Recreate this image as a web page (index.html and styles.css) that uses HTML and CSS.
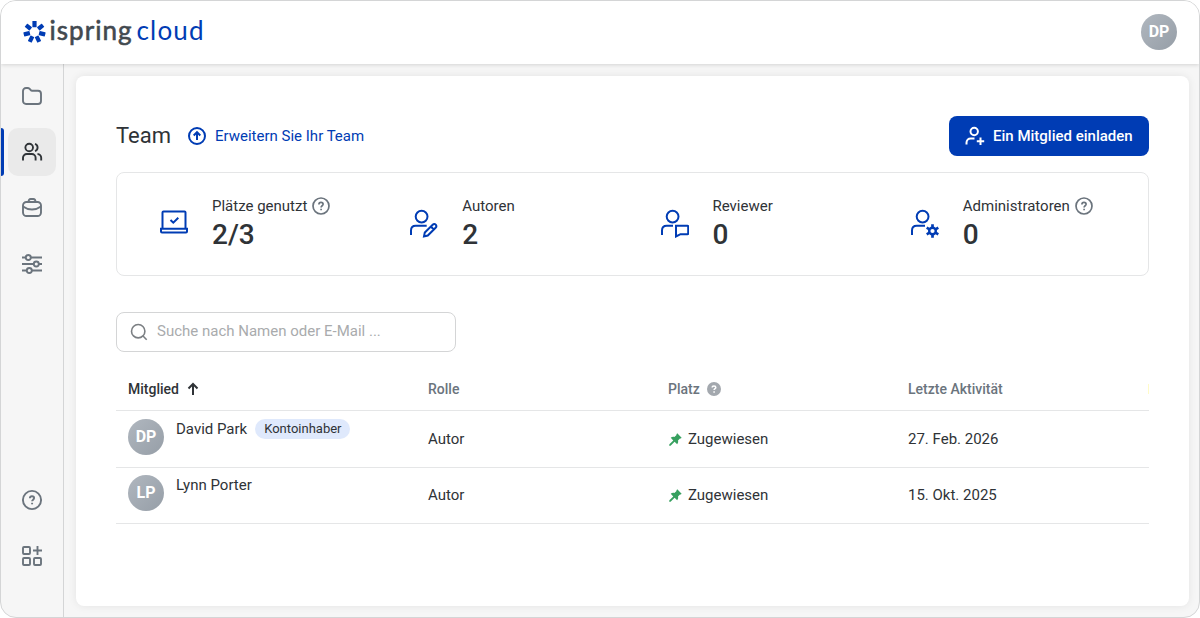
FILE: index.html
```
<!DOCTYPE html>
<html lang="de">
<head>
    <meta charset="UTF-8">
    <meta name="viewport" content="width=device-width, initial-scale=1.0">
    <title>Team - iSpring Cloud</title>
    <link rel="stylesheet" href="styles.css">
</head>
<body>
    <div class="app">
        <header class="header">
            <svg class="logo" width="190" height="48" viewBox="0 -8 190 48">
                <g fill="#003cb4">
                    <rect id="ray" x="9.4" y="5" width="4.200" height="6.300" rx="0.5"/>
                    <use href="#ray" transform="rotate(51.43 11.5 16)"/>
                    <use href="#ray" transform="rotate(102.86 11.5 16)"/>
                    <use href="#ray" transform="rotate(154.29 11.5 16)"/>
                    <use href="#ray" transform="rotate(205.71 11.5 16)"/>
                    <use href="#ray" transform="rotate(257.14 11.5 16)"/>
                    <use href="#ray" transform="rotate(308.57 11.5 16)"/>
                </g>
                <text class="logo-name" x="26.500" y="24" textLength="82">ispring</text>
                <text class="logo-product" x="113.500" y="24" textLength="67">cloud</text>
            </svg>
            <div class="avatar">DP</div>
        </header>
        <div class="body">
            <nav class="sidebar">
                <a class="nav-item">
                    <svg width="24" height="24" viewBox="0 0 24 24"><path d="M3 7a3 3 0 0 1 3-3h1.500c1 0 1.700.3 2.300 1l1 1.100c.3.4.8.6 1.300.6H18a3 3 0 0 1 3 3V17a3 3 0 0 1-3 3H6a3 3 0 0 1-3-3z"/></svg>
                </a>
                <a class="nav-item active">
                    <svg width="24" height="24" viewBox="0 0 24 24"><circle cx="9.200" cy="7.500" r="3.800"/><path d="M3 20.500v-2.700a3.800 3.800 0 0 1 3.800-3.800h5a3.800 3.800 0 0 1 3.800 3.800v2.700M15 3.900a3.800 3.800 0 0 1 0 7.200M17.500 14a3.800 3.800 0 0 1 3.700 3.800v2.700"/></svg>
                </a>
                <a class="nav-item">
                    <svg width="24" height="24" viewBox="0 0 24 24"><rect x="3" y="6" width="18" height="14" rx="3.500"/><path d="M8.500 6c0-2 .8-3 2.200-3h2.600c1.400 0 2.200 1 2.200 3M3 10.500c3 2.200 5.800 3 9 3s6-.8 9-3"/></svg>
                </a>
                <a class="nav-item">
                    <svg width="24" height="24" viewBox="0 0 24 24"><path d="M2 5.500h4M11 5.500h11M2 12h12M19 12h3M2 18.500h5M12 18.500h10"/><circle cx="8.300" cy="5.500" r="2.500"/><circle cx="16.300" cy="12" r="2.500"/><circle cx="9.300" cy="18.500" r="2.500"/></svg>
                </a>
                <div class="nav-spacer"></div>
                <a class="nav-item">
                    <svg width="24" height="24" viewBox="0 0 24 24"><circle cx="12" cy="12" r="9.100"/><path d="M9.900 10.200c0-1.200.9-2 2.100-2s2.100.8 2.100 1.900c0 1.500-2 1.600-2 3.200"/><path d="M12.100 14.800v1.500"/></svg>
                </a>
                <a class="nav-item">
                    <svg width="24" height="24" viewBox="0 0 24 24"><rect x="3" y="3" width="7" height="7" rx="1"/><rect x="3" y="14" width="7" height="7" rx="1"/><rect x="14" y="14" width="7" height="7" rx="1"/><path d="M17.500 2v9M13 6.500h9"/></svg>
                </a>
            </nav>
            <main class="card">
                <div class="title-row">
                    <h1>Team</h1>
                    <a class="upgrade">
                        <svg width="20" height="20" viewBox="0 0 20 20"><circle cx="10" cy="10" r="8"/><path d="M10 14V6.500M6.700 9.500L10 6.200l3.300 3.300"/></svg>
                        Erweitern Sie Ihr Team
                    </a>
                    <button class="invite">
                        <svg width="20" height="20" viewBox="0 0 20 20"><circle cx="9.200" cy="5.500" r="3.700"/><path d="M1.500 18.500v-1.700c0-2.800 1.700-4.300 4.300-4.300h3.700M15.500 11.500v7.500M11.800 15.300h7.400"/></svg>
                        Ein Mitglied einladen
                    </button>
                </div>

                <section class="stats">
                    <div class="stat">
                        <svg class="stat-icon" width="28" height="30" viewBox="0 0 28 30"><path d="M2.500 20V4.500c0-.6.4-1 1-1h21c.6 0 1 .4 1 1V20M1 20.800h26v2.700c0 .6-.4 1-1 1H2c-.6 0-1-.4-1-1zM10.500 12l2.800 2.700 5-4.900"/></svg>
                        <div>
                            <div class="stat-label">Plätze genutzt
                                <svg class="help" width="18" height="18" viewBox="0 0 18 18"><circle cx="9" cy="9" r="8"/><path d="M6.900 7.400c0-1.300.9-2.100 2.100-2.100s2.100.8 2.100 1.900c0 1.500-2 1.600-2 3.200M9.100 11.700v1.500"/></svg>
                            </div>
                            <div class="stat-value">2/3</div>
                        </div>
                    </div>
                    <div class="stat">
                        <svg class="stat-icon" width="28" height="30" viewBox="0 0 28 30"><circle cx="11.600" cy="8.600" r="5.900"/><path d="M1 27v-4.500c0-2.800 1.700-4.700 4.700-4.700h11M14 28.500l.8-4 7.900-7.800c1-1 2.200-.9 3 0s.9 2-.1 3L17.800 27.500zM20.900 18.500l2.600 2.700"/></svg>
                        <div>
                            <div class="stat-label">Autoren</div>
                            <div class="stat-value">2</div>
                        </div>
                    </div>
                    <div class="stat">
                        <svg class="stat-icon" width="28" height="30" viewBox="0 0 28 30"><circle cx="11.600" cy="8.600" r="5.900"/><path d="M1 27v-4.500c0-2.800 1.700-4.700 4.700-4.700H12M15 17.800h11.500c.4 0 .7.300.7.700v7c0 .4-.3.700-.7.700H19.500L15 28.500z"/></svg>
                        <div>
                            <div class="stat-label">Reviewer</div>
                            <div class="stat-value">0</div>
                        </div>
                    </div>
                    <div class="stat">
                        <svg class="stat-icon" width="28" height="30" viewBox="0 0 28 30"><circle cx="11.600" cy="8.600" r="5.900"/><path d="M1 27v-4.500c0-2.800 1.700-4.700 4.700-4.700H14"/><circle cx="21.500" cy="23" r="3.300" stroke-width="2.400"/><path d="M21.500 19.500v-3.200M21.500 26.500v3.200M24.500 21.300l2.800-1.600M24.500 24.700l2.800 1.600M18.500 21.300l-2.800-1.600M18.500 24.700l-2.800 1.600" stroke-width="2.700"/></svg>
                        <div>
                            <div class="stat-label">Administratoren
                                <svg class="help" width="18" height="18" viewBox="0 0 18 18"><circle cx="9" cy="9" r="8"/><path d="M6.900 7.400c0-1.300.9-2.100 2.100-2.100s2.100.8 2.100 1.900c0 1.500-2 1.600-2 3.200M9.100 11.700v1.500"/></svg>
                            </div>
                            <div class="stat-value">0</div>
                        </div>
                    </div>
                </section>

                <label class="search">
                    <svg width="18" height="18" viewBox="0 0 18 18"><circle cx="8.200" cy="8.200" r="6.700"/><path d="M13 13l3.700 3.700"/></svg>
                    <input type="text" placeholder="Suche nach Namen oder E-Mail ...">
                </label>

                <div class="members">
                    <div class="row head">
                        <div class="sorted">Mitglied
                            <svg width="12" height="14" viewBox="0 0 12 14"><path d="M6 13V2.500M1.500 6.500L6 2l4.500 4.500"/></svg>
                        </div>
                        <div>Rolle</div>
                        <div class="seat-head">Platz
                            <svg width="14" height="14" viewBox="0 0 14 14"><circle cx="7" cy="7" r="7" fill="#a3a8ae"/><path d="M5.200 5.600c0-1.100.8-1.700 1.800-1.700s1.800.6 1.800 1.600c0 1.200-1.700 1.200-1.700 2.600M7.100 9.200v1.500" fill="none" stroke="#fff" stroke-width="1.500"/></svg>
                        </div>
                        <div class="activity-head">Letzte Aktivität</div>
                    </div>
                    <div class="row">
                        <div class="member">
                            <div class="avatar">DP</div>
                            <span class="name">David Park</span>
                            <span class="badge">Kontoinhaber</span>
                        </div>
                        <div class="cell">Autor</div>
                        <div class="cell seat">
                            <svg width="13" height="13" viewBox="0 0 14 14"><path d="M8.900.4l4.700 4.700-.9.900-.9-.1-2.100 2.300c.4 1.600.1 2.900-.9 3.900L6 9.400 1.700 13.600.2 13.700l.2-1.500L4.600 8 1.900 5.200c1-1 2.400-1.300 3.900-.9l2.300-2.100-.1-.9z"/></svg>
                            Zugewiesen
                        </div>
                        <div class="cell">27. Feb. 2026</div>
                    </div>
                    <div class="row">
                        <div class="member">
                            <div class="avatar">LP</div>
                            <span class="name">Lynn Porter</span>
                        </div>
                        <div class="cell">Autor</div>
                        <div class="cell seat">
                            <svg width="13" height="13" viewBox="0 0 14 14"><path d="M8.900.4l4.700 4.700-.9.900-.9-.1-2.100 2.300c.4 1.600.1 2.900-.9 3.900L6 9.400 1.700 13.600.2 13.700l.2-1.500L4.600 8 1.900 5.200c1-1 2.400-1.300 3.900-.9l2.300-2.100-.1-.9z"/></svg>
                            Zugewiesen
                        </div>
                        <div class="cell">15. Okt. 2025</div>
                    </div>
                </div>
            </main>
        </div>
    </div>
</body>
</html>
```
FILE: styles.css
```
* {
    box-sizing: border-box;
}

body {
    margin: 0;
    background: #fff;
    color: #2f3337;
    font-family: Roboto, Arial, sans-serif;
    font-size: 15px;
    line-height: 20px;
}

svg {
    display: block;
    flex-shrink: 0;
}

.app {
    display: flex;
    flex-direction: column;
    height: 618px;
    border: 1px solid #d4d5d6;
    border-radius: 16px;
    background: #f6f6f6;
    overflow: hidden;
}

/* Header */
.header {
    display: flex;
    justify-content: space-between;
    align-items: flex-start;
    height: 63px;
    padding: 7px 22px 0;
    background: #fff;
    box-shadow: 0 1px 4px rgba(0, 0, 0, 0.14);
    z-index: 1;
}

.header .avatar {
    margin-top: 6px;
}

.logo-name,
.logo-product {
    font-family: Lato, sans-serif;
    font-size: 26px;
}

.logo-name {
    fill: #42494f;
    stroke: #42494f;
    stroke-width: 0.6px;
}

.logo-product {
    fill: #003cb4;
}

.avatar {
    width: 36px;
    height: 36px;
    border-radius: 50%;
    background: linear-gradient(135deg, #b0b7bf, #969ea7);
    color: #fff;
    font-size: 16px;
    font-weight: 700;
    line-height: 36px;
    text-align: center;
    flex-shrink: 0;
}

.body {
    display: flex;
    flex: 1;
}

/* Sidebar */
.sidebar {
    display: flex;
    flex-direction: column;
    gap: 8px;
    width: 63px;
    padding: 8px 7px 37px;
    border-right: 1px solid #d4d5d6;
}

.nav-item {
    position: relative;
    display: flex;
    align-items: center;
    justify-content: center;
    width: 48px;
    height: 48px;
    border-radius: 10px;
}

.nav-item svg {
    fill: none;
    stroke: #6b747d;
    stroke-width: 1.9;
}

.nav-item.active {
    background: #eaeaea;
}

.nav-item.active svg {
    stroke: #2f3337;
}

.nav-item.active::before {
    content: "";
    position: absolute;
    left: -7px;
    top: 0;
    width: 3px;
    height: 48px;
    border-radius: 0 3px 3px 0;
    background: #003cb4;
}

.nav-spacer {
    flex: 1;
}

/* Content */
.card {
    flex: 1;
    margin: 12px 10px 11px 12px;
    padding: 40px;
    border-radius: 8px;
    background: #fff;
    box-shadow: 0 0 8px rgba(0, 0, 0, 0.08);
}

.title-row {
    display: flex;
    align-items: center;
    height: 40px;
    margin-bottom: 16px;
}

h1 {
    margin: 0 16px 0 0;
    font-size: 22px;
    font-weight: 400;
    line-height: 32px;
}

.upgrade {
    display: flex;
    align-items: center;
    gap: 8px;
    color: #003cb4;
}

.upgrade svg {
    fill: none;
    stroke: #003cb4;
    stroke-width: 2;
}

.invite {
    display: flex;
    align-items: center;
    gap: 8px;
    width: 200px;
    height: 40px;
    margin-left: auto;
    padding: 0 16px;
    border: none;
    border-radius: 8px;
    background: #003cb4;
    color: #fff;
    font: 500 15px/20px Roboto, Arial, sans-serif;
    white-space: nowrap;
}

.invite svg {
    fill: none;
    stroke: #fff;
    stroke-width: 2;
}

.stats {
    display: grid;
    grid-template-columns: repeat(4, 1fr);
    height: 104px;
    margin-bottom: 36px;
    padding: 23px 15px 0;
    border: 1px solid #e5e6e7;
    border-radius: 8px;
}

.stat {
    display: flex;
    gap: 24px;
    padding-left: 28px;
}

.stat-icon {
    margin-top: 12px;
    fill: none;
    stroke: #003cb4;
    stroke-width: 2;
}

.stat-label {
    display: flex;
    align-items: center;
    gap: 5px;
}

.help {
    fill: none;
    stroke: #6b747d;
    stroke-width: 1.7;
}

.stat-value {
    font-size: 28px;
    font-weight: 500;
    line-height: 38px;
}

.search {
    display: flex;
    align-items: center;
    gap: 9px;
    width: 340px;
    height: 40px;
    margin-bottom: 16px;
    padding: 0 13px;
    border: 1px solid #d4d5d6;
    border-radius: 8px;
}

.search svg {
    fill: none;
    stroke: #7b7f83;
    stroke-width: 1.6;
}

.search input {
    flex: 1;
    padding: 0 0 2px;
    border: none;
    outline: none;
    background: none;
    font: 15px/20px Roboto, Arial, sans-serif;
}

.search input::placeholder {
    color: #a9abad;
}

/* Members table */
.row {
    display: grid;
    grid-template-columns: 300px 240px 240px 1fr;
    height: 56px;
    padding: 0 0 0 12px;
    border-bottom: 1px solid #e5e6e7;
}

.head {
    height: 43px;
    margin-bottom: 1px;
    padding-top: 11px;
    color: #6b747d;
    font-size: 14px;
    font-weight: 500;
}

.sorted,
.seat-head,
.activity-head {
    display: flex;
    align-items: center;
    height: 20px;
    gap: 8px;
}

.sorted {
    color: #2f3337;
}

.sorted svg {
    fill: none;
    stroke: #2f3337;
    stroke-width: 2;
}

.seat-head {
    gap: 7px;
}

/* column edge marker */
.activity-head::after {
    content: "";
    width: 1px;
    height: 10px;
    margin-left: auto;
    background: #fffbc8;
}

.member {
    display: flex;
    align-items: flex-start;
    padding-top: 7px;
}

.name {
    margin-left: 12px;
}

.badge {
    height: 20px;
    margin-left: 8px;
    padding: 0 8px 0 9px;
    border-radius: 10px;
    background: #dfe9fc;
    font-size: 13px;
}

.cell {
    padding-top: 17px;
}

.seat {
    display: flex;
    gap: 6px;
    padding-left: 1px;
}

.seat svg {
    margin-top: 4px;
    fill: #37a05f;
}
```
